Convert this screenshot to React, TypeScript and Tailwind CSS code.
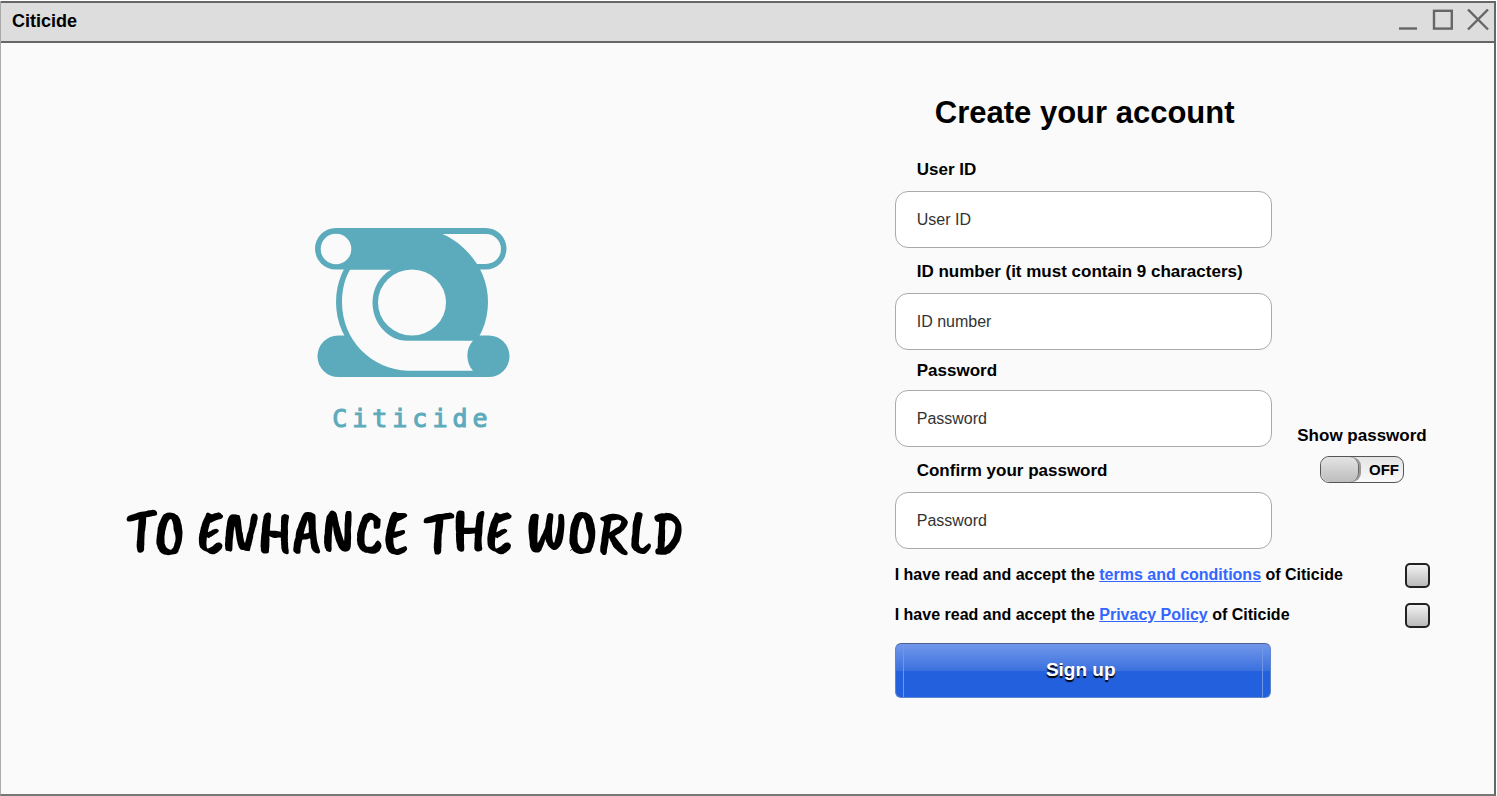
import { useId, useState, type ReactNode } from "react";

function WindowButton({ label, children }: { label: string; children: ReactNode }) {
  return (
    <button type="button" aria-label={label} className="flex size-6 items-center justify-center">
      <svg viewBox="0 0 24 24" className="size-6" fill="none" stroke="#666666" strokeWidth="2.4">
        {children}
      </svg>
    </button>
  );
}

function TitleBar() {
  return (
    <header className="flex h-[42px] items-center justify-between border-y-2 border-[#666666] bg-[#dddddd] pr-1 pb-[2px] pl-[11px]">
      <span className="text-[18px] leading-6 font-bold">Citicide</span>
      <div className="flex gap-[11px]">
        <WindowButton label="Minimize">
          <path d="M3 19.500H21" />
        </WindowButton>
        <WindowButton label="Maximize">
          <rect x="3" y="1.800" width="17.800" height="17.800" />
        </WindowButton>
        <WindowButton label="Close">
          <path d="M2 0.500L22 20.500M22 0.500L2 20.500" />
        </WindowButton>
      </div>
    </header>
  );
}

function LogoMark() {
  return (
    <svg viewBox="15 13 195 149" className="h-[149px] w-[195px]" role="img" aria-label="Citicide logo">
      <g fill="#5cabbd">
        <rect x="15" y="13" width="191.500" height="41.500" rx="20.750" />
        <ellipse cx="112" cy="87" rx="76" ry="74" />
        <rect x="17.500" y="120.500" width="192" height="41.500" rx="20.750" />
      </g>
      <g fill="#fafafa">
        <circle cx="36" cy="34" r="15.300" />
        <path d="M142.500 19H186A15 15 0 0 1 186 49H177C168 35.500 157 25.500 142.500 19Z" />
        <path d="M50 54.700H91C80 61 72.500 73 72.500 87.500C72.500 108 88 125.800 107 125.800H173C165.500 133.500 165.500 147.500 173 155.800H108C72 154.500 42 126 42 87C42 74.500 45 63 50 54.700Z" />
        <ellipse cx="112" cy="87.500" rx="34" ry="33" />
      </g>
    </svg>
  );
}

function Brand() {
  return (
    <section className="flex flex-col items-center pt-[185px]">
      <div className="flex flex-col items-center pl-[14px]">
        <LogoMark />
        <p className="mt-6 font-['DejaVu_Sans_Mono',monospace] text-[25px] leading-9 tracking-[5px] text-[#5cabbd] [-webkit-text-stroke:1px_#5cabbd]">
          Citicide
        </p>
      </div>
      <p className="mt-[66px] font-['Caveat_Brush','Liberation_Sans_Narrow',cursive] text-[63px] leading-[60px] whitespace-nowrap">
        TO ENHANCE THE WORLD
      </p>
    </section>
  );
}

type FieldProps = { label: string; placeholder: string; type?: string; compact?: boolean };

function Field({ label, placeholder, type = "text", compact = false }: FieldProps) {
  const id = useId();
  return (
    <div className="flex flex-col">
      <label htmlFor={id} className={`flex items-center pt-[2px] pl-[22px] text-[17px] font-bold ${compact ? "h-10" : "h-[45px]"}`}>
        {label}
      </label>
      <input
        id={id}
        type={type}
        placeholder={placeholder}
        className="h-[57px] w-full rounded-[13px] border border-[#aaaaaa] bg-white px-[21px] text-[16px] placeholder:text-[#333333]"
      />
    </div>
  );
}

function PasswordToggle({ shown, onChange }: { shown: boolean; onChange: (value: boolean) => void }) {
  return (
    <label className="flex flex-col items-center gap-2 pt-[74px] pr-[3px] text-[17px] leading-6 font-bold whitespace-nowrap">
      Show password
      <span className="relative flex h-[27px] w-[84px] items-center justify-between rounded-[9px] border border-[#555555] bg-linear-to-b from-[#e4e4e4] to-[#fafafa] has-checked:flex-row-reverse">
        <input
          type="checkbox"
          role="switch"
          checked={shown}
          onChange={(event) => onChange(event.target.checked)}
          className="absolute inset-0 cursor-pointer appearance-none"
        />
        <span className="h-[25px] w-[38px] rounded-[9px] border-r border-[#666666] bg-linear-to-b from-[#e4e4e4] to-[#bdbdbd] shadow-[2px_0_0_#999999]" />
        <span className="px-1 text-[15px]">{shown ? "ON" : "OFF"}</span>
      </span>
    </label>
  );
}

function Consent({ link }: { link: string }) {
  const id = useId();
  return (
    <div className="flex h-10 items-center justify-between text-[16px] font-bold">
      <label htmlFor={id}>
        I have read and accept the{" "}
        <a href="#" className="text-[#3366ff] underline">
          {link}
        </a>{" "}
        of Citicide
      </label>
      <input
        id={id}
        type="checkbox"
        className="size-[25px] appearance-none rounded-[5px] border-2 border-[#222222] bg-linear-to-b from-[#f2f2f2] to-[#bbbbbb] checked:to-[#3366ff]"
      />
    </div>
  );
}

function SignUpForm() {
  const [shown, setShown] = useState(false);
  const passwordType = shown ? "text" : "password";
  return (
    <form className="ml-[85px] w-[535px] pt-[46px]" onSubmit={(event) => event.preventDefault()}>
      <h1 className="w-[380px] text-center text-[31px] leading-12 font-bold">Create your account</h1>
      <div className="grid grid-cols-[377px_auto] justify-between pt-[9px]">
        <div>
          <Field label="User ID" placeholder="User ID" />
          <Field label="ID number (it must contain 9 characters)" placeholder="ID number" />
        </div>
        <div className="col-start-1">
          <Field label="Password" placeholder="Password" type={passwordType} compact />
          <Field label="Confirm your password" placeholder="Password" type={passwordType} />
        </div>
        <PasswordToggle shown={shown} onChange={setShown} />
      </div>
      <div className="pt-[6px] pb-[8px]">
        <Consent link="terms and conditions" />
        <Consent link="Privacy Policy" />
      </div>
      <button
        type="submit"
        className="flex h-[55px] w-[376px] rounded-[6px] border border-[#5f83cc] border-t-[#4c5f8f] bg-linear-to-b from-[#7197ea] via-[#3b70de] via-50% to-[#2260de] to-52% px-[7px] text-[19px] font-bold text-white"
      >
        <span className="flex h-full flex-1 items-center justify-center border-x border-[#7097e6] pr-1 [text-shadow:0_2px_1px_#000000]">
          Sign up
        </span>
      </button>
    </form>
  );
}

export default function App() {
  return (
    <div className="min-h-screen bg-white pt-px pr-px font-['Liberation_Sans',Arial,sans-serif] text-black">
      <div className="flex min-h-[calc(100vh-1px)] flex-col border-r-2 border-b-2 border-l border-r-[#666666] border-b-[#777777] border-l-[#aaaaaa] bg-[#fafafa]">
        <TitleBar />
        <main className="grid flex-1 grid-cols-[13fr_11fr]">
          <Brand />
          <SignUpForm />
        </main>
      </div>
    </div>
  );
}
